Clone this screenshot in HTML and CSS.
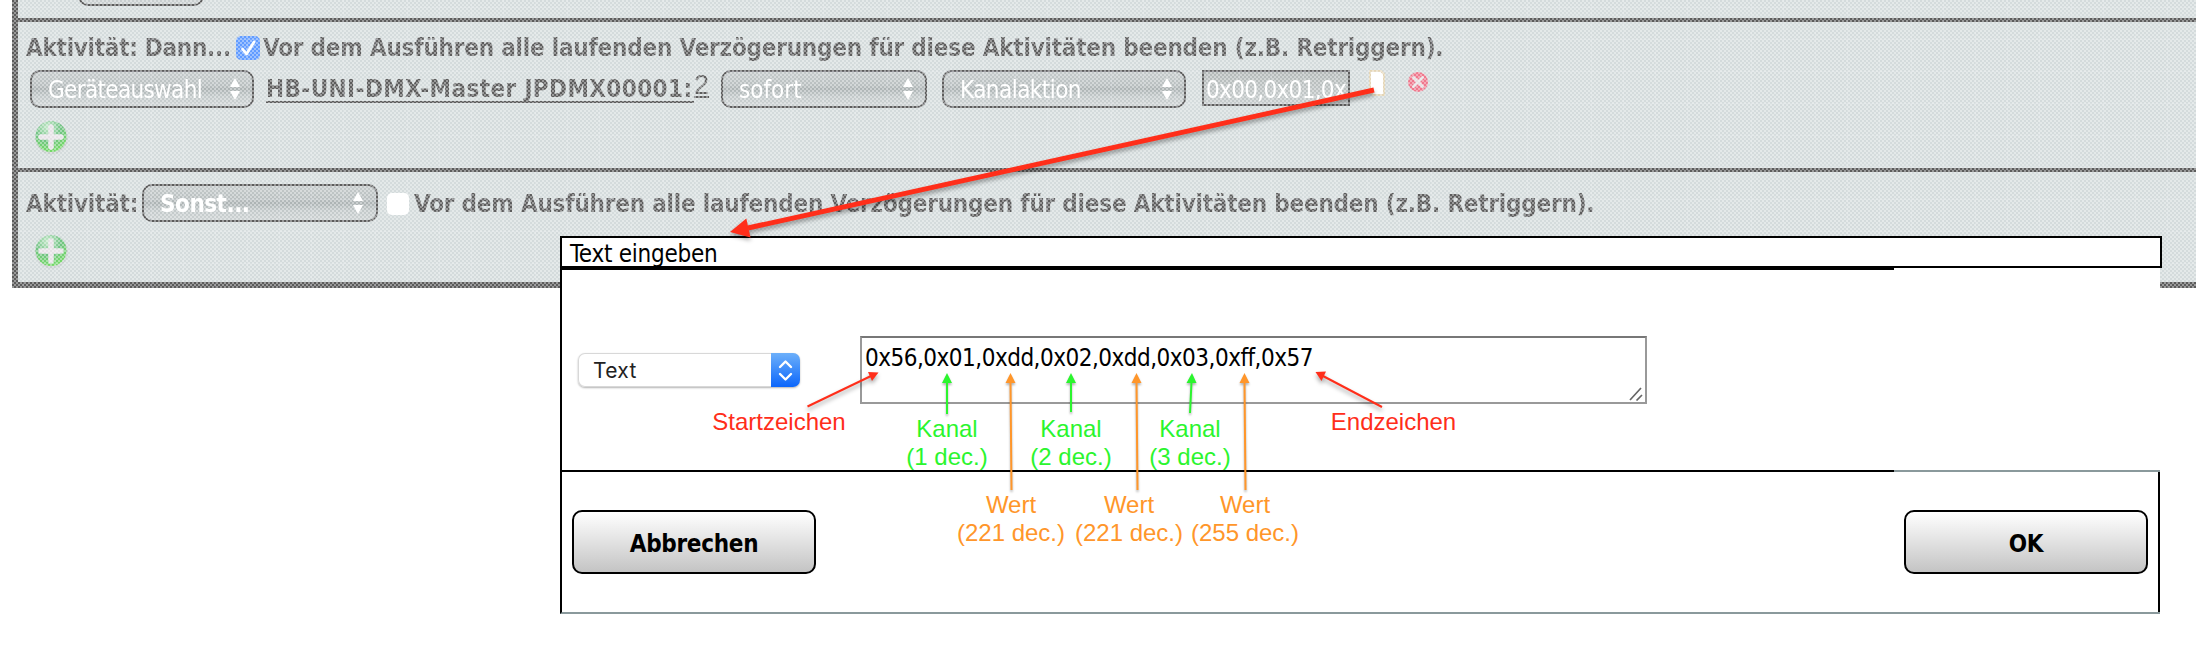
FILE: index.html
```
<!DOCTYPE html>
<html lang="de">
<head>
<meta charset="utf-8">
<title>Text eingeben</title>
<link rel="stylesheet" href="styles.css">
</head>
<body>
<svg class="defs" aria-hidden="true">
  <defs>
    <radialGradient id="green" cx="0.4" cy="0.2" r="0.85"><stop offset="0" stop-color="#a8dcb0"/><stop offset="0.5" stop-color="#1f9f3c"/><stop offset="1" stop-color="#25c808"/></radialGradient>
    <symbol id="plus" viewBox="0 0 36 36"><circle cx="18.500" cy="19" r="16.500" fill="#8f9696" opacity="0.4"/><circle cx="18" cy="17.500" r="15.500" fill="url(#green)"/><path d="M18 8V28M8 18H28" stroke="#d8d2d8" stroke-width="5.500" stroke-linecap="round"/></symbol>
    <symbol id="spin" viewBox="0 0 10 22"><path d="M5 0L10 9H0ZM5 22L10 13H0Z" fill="#fff"/></symbol>
  </defs>
</svg>
<main class="panel">
  <section class="row row-top"><div class="pick stub"></div></section>
  <section class="row row-then">
    <div class="line head">
      <span class="bold t-dann">Aktivität: Dann...</span>
      <span class="check on"><svg viewBox="0 0 24 24"><path d="M6.500 13L10.500 18L18 6" fill="none" stroke="#fff" stroke-width="2.800" stroke-linecap="round" stroke-linejoin="round"/></svg></span>
      <span class="bold t-vor">Vor dem Ausführen alle laufenden Verzögerungen für diese Aktivitäten beenden (z.B. Retriggern).</span>
    </div>
    <div class="line controls">
      <div class="pick p1"><span class="t-ger">Geräteauswahl</span><svg class="spin"><use href="#spin"/></svg></div>
      <a class="device"><span class="bold t-hb">HB-UNI-DMX-Master JPDMX00001:</span><span class="chan">2</span></a>
      <div class="pick p2"><span class="t-sof">sofort</span><svg class="spin"><use href="#spin"/></svg></div>
      <div class="pick p3"><span class="t-kan">Kanalaktion</span><svg class="spin"><use href="#spin"/></svg></div>
      <div class="value"><span class="t-val">0x00,0x01,0x</span></div>
      <svg class="page" viewBox="0 0 18 28"><path d="M2 2H13L16 5V26H5L2 22Z" fill="#fff" stroke="#d4bd8c" stroke-width="2"/></svg>
      <svg class="del" viewBox="0 0 22 22"><circle cx="11" cy="11" r="10" fill="#e62c4c"/><path d="M6.500 6.500L15.500 15.500M15.500 6.500L6.500 15.500" stroke="#d8ced2" stroke-width="3" stroke-linecap="round"/></svg>
    </div>
    <svg class="plus"><use href="#plus"/></svg>
  </section>
  <section class="row row-else">
    <div class="line head2">
      <span class="bold t-akt">Aktivität:</span>
      <div class="pick p4"><span class="bold t-son">Sonst...</span><svg class="spin"><use href="#spin"/></svg></div>
      <span class="check off"></span>
      <span class="bold t-vor">Vor dem Ausführen alle laufenden Verzögerungen für diese Aktivitäten beenden (z.B. Retriggern).</span>
    </div>
    <svg class="plus plus2"><use href="#plus"/></svg>
  </section>
  <div class="veil"></div>
</main>

<div class="dialog">
  <header class="title"><span class="t-title">Text eingeben</span></header>
  <div class="body">
    <div class="rule rule-top"><i></i><b></b></div>
    <div class="fields">
      <div class="native"><span>Text</span><em><svg viewBox="0 0 29 34"><path d="M9 14L14.500 8.500L20 14M9 21L14.500 26.500L20 21" fill="none" stroke="#fff" stroke-width="2.400" stroke-linecap="round" stroke-linejoin="round"/></svg></em></div>
      <div class="area"><span class="t-area">0x56,0x01,0xdd,0x02,0xdd,0x03,0xff,0x57</span><svg class="grip" viewBox="0 0 14 14"><path d="M1 13L12 1M7.500 13.500L13 8" stroke="#666" stroke-width="1.700"/></svg></div>
    </div>
    <div class="rule rule-mid"><i></i><b></b></div>
    <footer class="actions">
      <div class="btn"><span class="t-abb">Abbrechen</span></div>
      <div class="btn"><span class="t-ok">OK</span></div>
    </footer>
  </div>
</div>

<svg class="notes" viewBox="0 0 2196 652">
  <g class="red">
    <path d="M1374 90L748 228" stroke-width="5"/><path class="tip" d="M730 232L746.300 218.500L750.500 237.500Z"/>
    <path d="M807.500 406.500L871 376" stroke-width="2"/><path class="tip" d="M878.500 372.500L868 372L872 381Z"/>
    <path d="M1382 407L1323 376" stroke-width="2"/><path class="tip" d="M1315.500 372L1326 371.500L1321.500 381Z"/>
  </g>
  <g class="green">
    <path d="M947 414V382M1071 412V382M1190 413L1191.500 382" stroke-width="2"/>
    <path class="tip" d="M947 373L952 383H942ZM1071 373L1076 383H1066ZM1192 373L1196.500 383H1186.500Z"/>
  </g>
  <g class="orange">
    <path d="M1011.500 490L1010.500 382M1137.500 490L1136.500 382M1245.500 490L1244.500 382" stroke-width="2"/>
    <path class="tip" d="M1010.500 373L1015.500 383H1005.500ZM1136.500 373L1141.500 383H1131.500ZM1244.500 373L1249.500 383H1239.500Z"/>
  </g>
  <g class="label">
    <text class="c-red" x="779" y="430">Startzeichen</text>
    <text class="c-red" x="1393.500" y="430">Endzeichen</text>
    <text class="c-green" x="947" y="437">Kanal</text><text class="c-green" x="947" y="465">(1 dec.)</text>
    <text class="c-green" x="1071" y="437">Kanal</text><text class="c-green" x="1071" y="465">(2 dec.)</text>
    <text class="c-green" x="1190" y="437">Kanal</text><text class="c-green" x="1190" y="465">(3 dec.)</text>
    <text class="c-orange" x="1011" y="513">Wert</text><text class="c-orange" x="1011" y="541">(221 dec.)</text>
    <text class="c-orange" x="1129" y="513">Wert</text><text class="c-orange" x="1129" y="541">(221 dec.)</text>
    <text class="c-orange" x="1245" y="513">Wert</text><text class="c-orange" x="1245" y="541">(255 dec.)</text>
  </g>
</svg>
</body>
</html>
```
FILE: styles.css
```
* { box-sizing: border-box; }
body {
  margin: 0;
  width: 2196px;
  height: 652px;
  overflow: hidden;
  position: relative;
  background: #fff;
  color: #000;
  font: 24px/30px "DejaVu Sans Condensed", "DejaVu Sans", sans-serif;
  font-stretch: condensed;
}
span { white-space: nowrap; }
.defs { position: absolute; width: 0; height: 0; }

.panel {
  display: flex;
  flex-direction: column;
  position: relative;
  isolation: isolate;
  margin-left: 12px;
  height: 288px;
  border-left: 6px solid #000;
  border-bottom: 6px solid #000;
  background: #bcc7c8;
}
/* Checkered veil that dims everything behind the dialog */
.veil {
  position: absolute;
  inset: 0 0 -6px -6px;
  mix-blend-mode: screen;
  background:
    linear-gradient(90deg, rgba(210,210,230,.18) 1px, transparent 1px) 11px 7px / 32px 32px,
    linear-gradient(rgba(210,210,230,.18) 1px, transparent 1px) 11px 7px / 32px 32px,
    repeating-conic-gradient(#9a9a9a 0 25%, #5c5c5c 0 50%) 0 0 / 4px 4px;
}
.row { flex: none; }
.row-top { height: 22px; border-bottom: 4px solid #000; padding-left: 60px; display: flex; }
.row-then { height: 150px; border-bottom: 4px solid #000; }
.row-else { height: 110px; }
.line { display: flex; }
.bold { font-weight: bold; }

.pick {
  display: flex;
  align-items: center;
  height: 38px;
  border: 2px solid #000;
  border-radius: 10px;
  background: linear-gradient(#a2abac, #909a9b 40%, #7c8788 50%, #a0aaab 72%, #adb6b7);
  color: #fff;
}
.pick .spin { width: 10px; height: 22px; margin-left: auto; margin-right: 12px; }
.stub { width: 126px; height: 38px; margin-top: -32px; }
.head { height: 48px; padding: 10px 0 0 8px; }
.head > .bold { margin-top: 1px; }
.t-dann { width: 210px; letter-spacing: -.25px; }
.t-vor { letter-spacing: -.2px; }
.check { width: 24px; height: 24px; border-radius: 5px; margin-top: 4px; margin-right: 3px; flex: none; }
.check svg { display: block; width: 24px; height: 24px; }
.on { background: #0763ff; }
.off { background: #fff; width: 22px; height: 22px; margin: 9px 5px 0 9px; }

.controls { padding-left: 12px; height: 66px; }
.pick span { padding: 2px 0 0 16px; }
.p1 { width: 224px; margin-right: 12px; }
.t-ger { letter-spacing: -.66px; }
.device { display: flex; width: 443px; height: 33px; margin-right: 12px; }
.t-hb { height: 33px; width: 430px; border-bottom: 2px solid #000; line-height: 38px; letter-spacing: .4px; }
.chan { font: 27px/30px "Liberation Sans", sans-serif; text-decoration: underline; height: 30px; }
.p2 { width: 206px; margin-right: 15px; }
.p3 { width: 244px; margin-right: 16px; }
.t-kan { letter-spacing: -.55px; }
.value { width: 148px; height: 36px; border: 2px solid #000; background: linear-gradient(#87908f, #a4adae); color: #fff; padding: 3px 0 0 2px; }
.t-val { letter-spacing: -.68px; }
.page { width: 18px; height: 28px; margin: -1px 0 0 18px; }
.del { width: 22px; height: 22px; margin: 1px 0 0 21px; }
.plus { display: block; width: 36px; height: 36px; margin: -17px 0 0 15px; }

.head2 { padding: 12px 0 0 8px; height: 62px; }
.head2 > .bold { margin-top: 5px; }
.t-akt { width: 116px; letter-spacing: -.2px; }
.p4 { width: 236px; }
.t-son { letter-spacing: -.5px; }
.p4 .spin { margin-right: 13px; }
.plus2 { margin-top: -1px; }

.dialog { position: absolute; left: 560px; top: 236px; width: 1602px; }
.title { height: 32px; border: 2px solid #000; background: #fff; padding-left: 8px; line-height: 32px; letter-spacing: -.25px; }
.body { width: 1600px; background: #fff; border-left: 2px solid #000; border-bottom: 2px solid #8a999c; }
.rule { display: flex; height: 2px; }
.rule i { width: 1332px; background: #000; }
.rule-mid b { flex: 1; background: #8a999c; }
.fields { height: 200px; display: flex; align-items: flex-start; padding: 66px 0 0 16px; }
.native { width: 222px; height: 34px; margin: 17px 60px 0 0; border-radius: 7px; background: #fff; display: flex; justify-content: space-between; box-shadow: 0 0 0 1px #d8d8d8 inset, 0 1px 2px rgba(0,0,0,.3); overflow: hidden; }
.native span { padding-left: 15px; font: 21px/36px Inter, sans-serif; letter-spacing: .3px; color: #222; }
.native em { width: 29px; height: 34px; background: linear-gradient(#6db0fa, #0b66fb); }
.native svg { display: block; }
.area { position: relative; width: 787px; height: 68px; border: 2px solid #999; border-top-color: #777; padding: 5px 0 0 3px; }
.t-area { letter-spacing: -.5px; }
.grip { position: absolute; right: 2px; bottom: 1px; width: 14px; height: 14px; }
.actions { height: 140px; padding: 38px 10px 0 10px; border-right: 2px solid #000; display: flex; justify-content: space-between; }
.btn { width: 244px; height: 64px; border: 2px solid #000; border-radius: 10px; background: linear-gradient(#fff, #c4c4c4); display: flex; align-items: center; justify-content: center; font-weight: bold; letter-spacing: -.3px; padding-top: 3px; }

.notes { position: absolute; left: 0; top: 0; width: 2196px; height: 652px; }
.red { stroke: #ff2e1a; fill: none; filter: drop-shadow(0 3px 2px rgba(0,0,0,.35)); }
.green { stroke: #2bf52e; fill: none; filter: drop-shadow(0 2px 1px rgba(0,0,0,.3)); }
.orange { stroke: #ff962a; fill: none; filter: drop-shadow(0 2px 1px rgba(0,0,0,.3)); }
.tip { stroke: none; }
.red .tip { fill: #ff2e1a; }
.green .tip { fill: #2bf52e; }
.orange .tip { fill: #ff962a; }
.label { font: 24px "Liberation Sans", sans-serif; text-anchor: middle; }
.c-red { fill: #ff2e1a; }
.c-green { fill: #2bf52e; }
.c-orange { fill: #ff962a; }
```
